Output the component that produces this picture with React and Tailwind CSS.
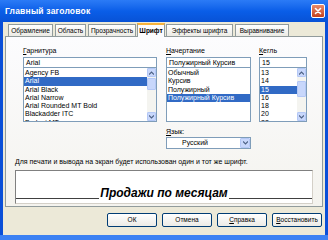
import React from 'react';

const fontList = ['Agency FB', 'Arial', 'Arial Black', 'Arial Narrow', 'Arial Rounded MT Bold', 'Blackadder ITC', 'Bodoni MT'];
const styleList = ['Обычный', 'Курсив', 'Полужирный', 'Полужирный Курсив'];
const sizeList = ['13', '14', '15', '16', '18', '20', '22'];
const tabs = [
  { t: 'Обрамление', w: 'w-[45px]' },
  { t: 'Область', w: 'w-[31px]' },
  { t: 'Прозрачность', w: 'w-[48px]' },
  { t: 'Шрифт', w: 'w-[28px]' },
  { t: 'Эффекты шрифта', w: 'w-[67px]' },
  { t: 'Выравнивание', w: 'w-[54px]' },
];

const Arrow = ({ up }) => (
  <svg width="5" height="4" viewBox="0 0 5 4">
    <path d={up ? 'M0 3.5 L2.5 1 L5 3.5' : 'M0 0.5 L2.5 3 L5 0.5'} fill="none" stroke="#4d6185" strokeWidth="1.2" />
  </svg>
);

const ScrollBar = ({ thumb }) => (
  <div className="w-[9px] flex flex-col bg-[#f4f4f0]">
    <div className="h-[9px] bg-[#c8d7fb] border border-[#b4c8f6] rounded-[1px] flex items-center justify-center"><Arrow up /></div>
    <div className={`h-[12px] bg-[#c8d7fb] border border-[#b4c8f6] rounded-[1px] ${thumb}`} />
    <div className="flex-1" />
    <div className="h-[9px] bg-[#c8d7fb] border border-[#b4c8f6] rounded-[1px] flex items-center justify-center"><Arrow /></div>
  </div>
);

const Column = ({ label, first, value, items, selected, width, scroll }) => (
  <div className={`flex flex-col ${width}`}>
    <div className="h-[9px] text-[7px] leading-[9px] text-black">
      <span className="underline">{first}</span>{label}
    </div>
    <div className="h-[11px] mt-[2px] border border-[#7f9db9] bg-white text-[7px] leading-[9px] px-[2px]">{value}</div>
    <div className="h-[54px] border border-[#7f9db9] border-t-0 bg-white flex overflow-hidden">
      <div className="flex-1 pt-[1px] overflow-hidden">
        {items.map((it) => (
          <div
            key={it}
            className={`h-[8.3px] text-[7px] leading-[8.3px] px-[1px] whitespace-nowrap ${it === selected ? 'bg-[#316ac5] text-white' : 'text-black'}`}
          >
            {it}
          </div>
        ))}
      </div>
      {scroll && <ScrollBar thumb={scroll} />}
    </div>
  </div>
);

const Button = ({ children }) => (
  <div className="w-[50px] h-[14px] border border-[#003c74] rounded-[2px] bg-gradient-to-b from-white to-[#ecebe6] text-[6.5px] leading-[12px] text-center text-black">
    {children}
  </div>
);

export default function App() {
  return (
    <div className="w-[328px] h-[240px] flex flex-col bg-[#0a4fd8] overflow-hidden" style={{ fontFamily: '"Liberation Sans", Arial, sans-serif' }}>
      {/* title bar */}
      <div className="h-[22px] flex items-center justify-between pl-[5px] pr-[3px] bg-gradient-to-b from-[#2b7bf6] via-[#0a5ee8] to-[#0852d6]">
        <span className="text-white font-bold text-[8.5px] tracking-[0.2px]">Главный заголовок</span>
        <div className="w-[14px] h-[14px] rounded-[2px] border border-white bg-gradient-to-b from-[#e98a6a] to-[#c4401c] flex items-center justify-center">
          <svg width="8" height="8" viewBox="0 0 8 8">
            <path d="M1.5 1.5 L6.5 6.5 M6.5 1.5 L1.5 6.5" stroke="white" strokeWidth="1.6" strokeLinecap="round" />
          </svg>
        </div>
      </div>

      {/* body */}
      <div className="h-[213px] mx-[3px] bg-[#ece9d8] flex flex-col">
        <div className="flex items-end gap-[2px] pl-[5px] pt-[1px] h-[14px]">
          {tabs.map(({ t, w }) => (
            <div
              key={t}
              className={
                t === 'Шрифт'
                  ? `${w} h-[14px] -mx-[1px] bg-[#fcfcfe] border border-b-0 border-[#919b9c] border-t-[2px] border-t-[#f7b33d] text-[6.5px] leading-[11px] text-center font-bold text-black -mb-[1px] z-10 whitespace-nowrap`
                  : `${w} h-[12px] bg-gradient-to-b from-white to-[#ecebe5] border border-b-0 border-[#919b9c] text-[6.5px] leading-[11px] text-center text-black whitespace-nowrap`
              }
            >
              {t}
            </div>
          ))}
        </div>

        <div className="h-[171px] mx-[2px] border border-[#919b9c] bg-gradient-to-b from-[#fcfcfe] to-[#f4f3ee] pl-[9px] pr-[9px] pt-[9px] flex flex-col">
          <div className="flex pl-[8px] gap-[9px]">
            <Column label="арнитура" first="Г" value="Arial" items={fontList} selected="Arial" width="w-[134px]" scroll="mt-[1px]" />
            <Column label="ачертание" first="Н" value="Полужирный Курсив" items={styleList} selected="Полужирный Курсив" width="w-[85px]" />
            <Column label="егль" first="К" value="15" items={sizeList} selected="15" width="w-[48px] -ml-[1px]" scroll="mt-[4px] h-[16px]" />
          </div>

          <div className="pl-[151px] mt-[5px]">
            <div className="h-[9px] text-[7px] leading-[9px] text-black"><span className="underline">Я</span>зык:</div>
            <div className="w-[85px] h-[12px] mt-[1px] border border-[#7f9db9] bg-white flex items-center">
              <span className="flex-1 text-[7px] pl-[15px] text-black">Русский</span>
              <div className="w-[10px] h-[10px] bg-[#c8d7fb] border border-[#b4c8f6] rounded-[1px] flex items-center justify-center"><Arrow /></div>
            </div>
          </div>

          <div className="text-[7px] leading-[9px] text-black mt-[8px]">
            Для печати и вывода на экран будет использован один и тот же шрифт.
          </div>

          <div className="h-[34px] mt-[4px] border-t border-l border-[#808080] border-r border-b border-r-[#d4d0c8] border-b-[#d4d0c8] bg-white flex items-end">
            <div className="flex items-end w-full h-[23px]">
              <div className="flex-1 border-b border-[#404040] mb-[4px]" />
              <span className="text-[12px] leading-[14px] font-bold italic text-black px-[1px] mb-[3px]">Продажи по месяцам</span>
              <div className="flex-1 border-b border-[#404040] mb-[4px]" />
            </div>
          </div>
        </div>

        <div className="flex justify-end gap-[5px] pr-[3px] mt-[6px]">
          <Button>ОК</Button>
          <Button>Отмена</Button>
          <Button><span className="underline">С</span>правка</Button>
          <Button><span className="underline">В</span>осстановить</Button>
        </div>
      </div>

      <div className="flex-1 bg-[#3c81f3]" />
    </div>
  );
}
